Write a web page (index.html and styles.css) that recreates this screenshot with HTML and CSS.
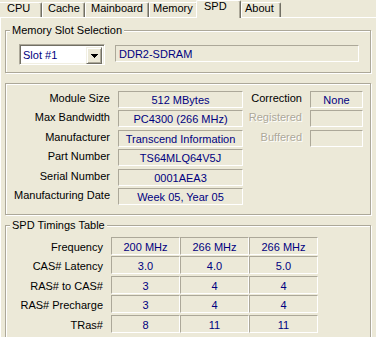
FILE: index.html
```html
<!DOCTYPE html>
<html lang="en">
<head>
    <meta charset="UTF-8">
    <title>CPU-Z SPD</title>
    <link rel="stylesheet" href="styles.css">
</head>
<body>
    <div class="tabs">
        <div class="tab tab-cpu">CPU</div>
        <div class="tab tab-cache">Cache</div>
        <div class="tab tab-mainboard">Mainboard</div>
        <div class="tab tab-memory">Memory</div>
        <div class="tab tab-spd active">SPD</div>
        <div class="tab tab-about">About</div>
    </div>

    <div class="page">
        <!-- slot selection -->
        <fieldset class="group">
            <legend>Memory Slot Selection</legend>
            <div class="slot-row">
                <div class="combo">
                    <span class="combo-text">Slot #1</span>
                    <span class="combo-btn">
                        <svg width="7" height="4" viewBox="0 0 7 4" shape-rendering="crispEdges"><path d="M0 0h7v1h-1v1h-1v1h-1v1h-1v-1h-1v-1h-1v-1h-1z" fill="#000"/></svg>
                    </span>
                </div>
                <div class="field field-type">DDR2-SDRAM</div>
            </div>
        </fieldset>

        <!-- module info -->
        <fieldset class="group group-module">
            <div class="module-grid">
                <div class="label label-main">Module Size</div>
                <div class="field">512 MBytes</div>
                <div class="label">Correction</div>
                <div class="field">None</div>

                <div class="label label-main">Max Bandwidth</div>
                <div class="field">PC4300 (266 MHz)</div>
                <div class="label disabled">Registered</div>
                <div class="field"></div>

                <div class="label label-main">Manufacturer</div>
                <div class="field">Transcend Information</div>
                <div class="label disabled">Buffered</div>
                <div class="field"></div>

                <div class="label label-main">Part Number</div>
                <div class="field">TS64MLQ64V5J</div>

                <div class="label label-main">Serial Number</div>
                <div class="field">0001AEA3</div>

                <div class="label label-main">Manufacturing Date</div>
                <div class="field">Week 05, Year 05</div>
            </div>
        </fieldset>

        <!-- timings -->
        <fieldset class="group group-timings">
            <legend>SPD Timings Table</legend>
            <div class="timings">
                <div class="label">Frequency</div>
                <div class="cell">200 MHz</div>
                <div class="cell">266 MHz</div>
                <div class="cell">266 MHz</div>

                <div class="label">CAS# Latency</div>
                <div class="cell">3.0</div>
                <div class="cell">4.0</div>
                <div class="cell">5.0</div>

                <div class="label">RAS# to CAS#</div>
                <div class="cell">3</div>
                <div class="cell">4</div>
                <div class="cell">4</div>

                <div class="label">RAS# Precharge</div>
                <div class="cell">3</div>
                <div class="cell">4</div>
                <div class="cell">4</div>

                <div class="label">TRas#</div>
                <div class="cell">8</div>
                <div class="cell">11</div>
                <div class="cell">11</div>
            </div>
        </fieldset>
    </div>
</body>
</html>
```

FILE: styles.css
```css
* {
    box-sizing: border-box;
}

html, body {
    overflow: hidden;
}

body {
    margin: 0;
    background: #ECE9D8;
    color: #000;
    font-family: "Liberation Sans", Arial, sans-serif;
    font-size: 11px;
}

/* tab strip */
.tabs {
    display: flex;
    align-items: flex-end;
    height: 17px;
}

.tab {
    height: 15px;
    border-top: 1px solid #fff;
    border-left: 1px solid #fff;
    border-right: 1px solid #716F64;
    border-radius: 2px 2px 0 0;
    box-shadow: inset -1px 0 #ACA899;
    padding-left: 5px;
    line-height: 11px;
    white-space: nowrap;
}

.tab-cpu { width: 46px; margin-left: -4px; padding-left: 10px; }
.tab-cache { width: 43px; }
.tab-mainboard { width: 64px; }
.tab-memory { width: 49px; padding-left: 3px; }
.tab-about { width: 40px; padding-left: 3px; }

.tab.active {
    position: relative;
    z-index: 1;
    width: 45px;
    height: 18px;
    margin-left: -2px;
    margin-bottom: -1px;
    padding-left: 7px;
    background: #ECE9D8;
}

/* tab page */
.page {
    border-top: 1px solid #fff;
    border-left: 1px solid #fff;
    padding-top: 6px;
}

.group {
    margin: 0 5px 0 4px;
    padding: 0;
    min-width: 0;
    border: 1px solid #ACA899;
    box-shadow: inset 1px 1px #fff, 1px 1px #fff;
}

.group legend {
    margin-left: 4px;
    padding: 0 2px;
    line-height: 13px;
    background: #ECE9D8;
}

.group-module {
    margin-top: 10px;
}

.group-timings {
    margin-top: 4px;
}

/* slot selection */
.slot-row {
    display: flex;
    align-items: flex-start;
    gap: 10px;
    padding: 7px 11px 7px 13px;
}

.combo {
    display: flex;
    width: 86px;
    height: 21px;
    padding: 2px;
    border: 1px solid;
    border-color: #ACA899 #fff #fff #ACA899;
    box-shadow: inset 1px 1px #716F64, inset -1px -1px #F1EFE2;
    background: #fff;
}

.combo-text {
    flex: 1;
    padding-left: 1px;
    line-height: 17px;
    color: #000080;
}

.combo-btn {
    display: flex;
    align-items: center;
    justify-content: center;
    width: 16px;
    height: 17px;
    border: 1px solid;
    border-color: #F1EFE2 #716F64 #716F64 #F1EFE2;
    box-shadow: inset 1px 1px #fff, inset -1px -1px #ACA899;
    background: #ECE9D8;
}

.combo-btn svg {
    display: block;
}

/* value boxes */
.field,
.cell {
    border: 1px solid;
    border-color: #ACA899 #fff #fff #ACA899;
    color: #000080;
    text-align: center;
    white-space: nowrap;
    overflow: hidden;
}

.field {
    height: 17px;
    padding-top: 1px;
    line-height: 14px;
}

.field-type {
    flex: 1;
    margin-top: 1px;
    padding-left: 3px;
    text-align: left;
}

.label {
    text-align: right;
    padding-right: 8px;
    line-height: 15px;
    white-space: nowrap;
}

.label.disabled {
    color: #ACA899;
    text-shadow: 1px 1px #fff;
}

/* module info grid */
.module-grid {
    display: grid;
    grid-template-columns: 111px 125px 67px 53px;
    grid-auto-rows: 17px;
    row-gap: 2.4px;
    padding: 7px 0 9px 1px;
}

.label-main {
    grid-column: 1;
}

/* timings table */
.timings {
    display: grid;
    grid-template-columns: 104px repeat(3, 69px);
    grid-auto-rows: 18px;
    row-gap: 1.5px;
    padding: 5px 0 8px 1px;
}

.timings .label {
    padding-top: 2px;
    line-height: 16px;
}

.cell {
    height: 18px;
    padding-top: 1px;
    line-height: 16px;
}
```
